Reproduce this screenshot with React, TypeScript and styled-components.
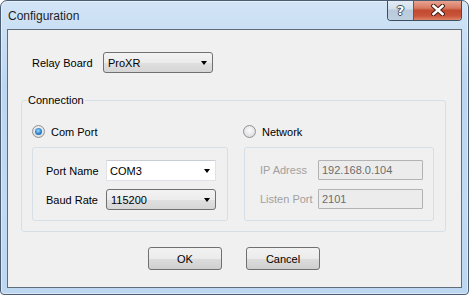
import styled, { createGlobalStyle } from "styled-components";

const GlobalStyle = createGlobalStyle`
  html, body {
    margin: 0;
    padding: 0;
    background: #ffffff;
  }
  body {
    font-family: "Liberation Sans", Arial, sans-serif;
    font-size: 11px;
    color: #000;
  }
`;

const Window = styled.div`
  box-sizing: border-box;
  width: 469px;
  height: 295px;
  border: 1px solid #4a5d72;
  border-radius: 7px 7px 4px 4px;
  background: linear-gradient(180deg, #d2e4f6 0%, #bcd6f1 30%, #c1daf3 70%, #bed7f1 100%);
  display: flex;
  flex-direction: column;
  padding: 0 6px 6px 6px;
  box-shadow: inset 0 0 0 1px rgba(255, 255, 255, 0.45);
  overflow: hidden;
`;

const TitleBar = styled.div`
  height: 28px;
  display: flex;
  align-items: flex-start;
  justify-content: space-between;
  flex-shrink: 0;
`;

const TitleText = styled.div`
  font-size: 12px;
  color: #1e1e1e;
  margin: 8px 0 0 1px;
  line-height: 14px;
`;

const CaptionButtons = styled.div`
  display: flex;
  margin-top: -1px;
  height: 20px;
  border: 1px solid #3d4e60;
  border-top: none;
  border-radius: 0 0 4px 4px;
  overflow: hidden;
`;

const HelpButton = styled.div`
  width: 25px;
  display: flex;
  align-items: center;
  justify-content: center;
  background: linear-gradient(180deg, #e6eef6 0%, #d2dfeb 45%, #b8cadb 50%, #bfd0e0 100%);
  border-right: 1px solid #50606f;
  font-family: "DejaVu Sans", sans-serif;
  font-weight: bold;
  font-size: 13px;
  color: #ffffff;
  text-shadow: 1px 0 #3d4a57, -1px 0 #3d4a57, 0 1px #3d4a57, 0 -1px #3d4a57;
`;

const CloseButton = styled.div`
  width: 47px;
  display: flex;
  align-items: center;
  justify-content: center;
  background: linear-gradient(180deg, #e9a997 0%, #d77a63 40%, #c24a2f 52%, #c9553b 80%, #de8467 100%);
`;

const Client = styled.div`
  flex: 1;
  border: 1px solid #5f6d7b;
  background: #f0f0f0;
  padding: 22px 15px 0 13px;
  display: flex;
  flex-direction: column;
`;

const FieldRow = styled.div<{ $label: number; $indent?: number }>`
  display: flex;
  align-items: center;
  margin-left: ${(p) => p.$indent ?? 0}px;

  & > label {
    width: ${(p) => p.$label}px;
    flex-shrink: 0;
  }
`;

const Label = styled.label<{ $disabled?: boolean }>`
  color: ${(p) => (p.$disabled ? "#a0a0a0" : "#000")};
`;

const Combo = styled.div<{ $editable?: boolean }>`
  box-sizing: border-box;
  width: 110px;
  height: 21px;
  display: flex;
  align-items: center;
  justify-content: space-between;
  padding: 0 5px 0 ${(p) => (p.$editable ? 3 : 4)}px;
  border: 1px solid ${(p) => (p.$editable ? "#dfe3e8" : "#707070")};
  border-radius: ${(p) => (p.$editable ? 1 : 3)}px;
  background: ${(p) =>
    p.$editable
      ? "#ffffff"
      : "linear-gradient(180deg, #f3f3f3 0%, #ececec 50%, #e0e0e0 51%, #d6d6d6 100%)"};
  ${(p) => (p.$editable ? "border-top-color: #c9ced4;" : "")}
`;

const Arrow = styled.span`
  width: 0;
  height: 0;
  border-left: 3.5px solid transparent;
  border-right: 3.5px solid transparent;
  border-top: 4px solid #000;
  margin-top: 1px;
`;

const GroupBox = styled.fieldset`
  margin: 21px 0 0 0;
  padding: 18px 10px 10px 10px;
  border: 1px solid #d5dfe5;
  border-radius: 3px;
  min-inline-size: 0;
  width: 425px;
  box-sizing: border-box;
  display: grid;
  grid-template-columns: 196px 190px;
  column-gap: 16px;
`;

const Legend = styled.legend`
  padding: 0 1px;
  margin-left: -5px;
  line-height: 13px;
  color: #000;
`;

const Column = styled.div`
  display: flex;
  flex-direction: column;
  gap: 9px;
`;

const RadioRow = styled.div<{ $disabled?: boolean }>`
  display: flex;
  align-items: center;
  gap: 6px;
  height: 13px;
  color: #000;
  margin-left: ${(p) => (p.$disabled ? -1 : 0)}px;
`;

const RadioCircle = styled.span<{ $checked?: boolean }>`
  box-sizing: border-box;
  width: 13px;
  height: 13px;
  border-radius: 50%;
  border: 1px solid #8f9297;
  background: radial-gradient(circle at 50% 40%, #fbfbfb 0%, #e6e6e6 55%, #cfcfcf 100%);
  display: flex;
  align-items: center;
  justify-content: center;

  &::after {
    content: "";
    display: ${(p) => (p.$checked ? "block" : "none")};
    width: 7px;
    height: 7px;
    border-radius: 50%;
    background: radial-gradient(circle at 45% 40%, #9ee0ff 0%, #3b8fd6 45%, #15468a 100%);
  }
`;

const Panel = styled.div<{ $pad: string; $gap: number }>`
  border: 1px solid #d5dfe5;
  border-radius: 3px;
  padding: ${(p) => p.$pad};
  display: flex;
  flex-direction: column;
  gap: ${(p) => p.$gap}px;
`;

const TextBox = styled.div`
  box-sizing: border-box;
  width: 105px;
  height: 20px;
  border: 1px solid #b3b3b3;
  border-radius: 1px;
  background: #ececec;
  color: #6d6d6d;
  display: flex;
  align-items: center;
  padding-left: 3px;
`;

const ButtonBar = styled.div`
  display: flex;
  justify-content: center;
  gap: 24px;
  margin-top: 15px;
  padding-left: 1px;
`;

const Button = styled.button`
  box-sizing: border-box;
  width: 74px;
  height: 23px;
  border: 1px solid #707070;
  border-radius: 3px;
  background: linear-gradient(180deg, #f2f2f2 0%, #ebebeb 50%, #dddddd 51%, #cfcfcf 100%);
  font-family: "Liberation Sans", Arial, sans-serif;
  font-size: 11px;
  color: #000;
  padding: 0;
`;

function CloseGlyph() {
  return (
    <svg width="14" height="12" viewBox="0 0 14 12">
      <path d="M2.5 2 L11.5 10 M11.5 2 L2.5 10" stroke="#4a1d12" strokeWidth="4.6" strokeLinecap="square" />
      <path d="M2.5 2 L11.5 10 M11.5 2 L2.5 10" stroke="#ffffff" strokeWidth="2.6" strokeLinecap="square" />
    </svg>
  );
}

export default function App() {
  return (
    <>
      <GlobalStyle />
      <Window>
        <TitleBar>
          <TitleText>Configuration</TitleText>
          <CaptionButtons>
            <HelpButton>?</HelpButton>
            <CloseButton>
              <CloseGlyph />
            </CloseButton>
          </CaptionButtons>
        </TitleBar>
        <Client>
          <FieldRow $label={71} $indent={11}>
            <Label>Relay Board</Label>
            <Combo>
              <span>ProXR</span>
              <Arrow />
            </Combo>
          </FieldRow>

          <GroupBox>
            <Legend>Connection</Legend>
            <Column>
              <RadioRow>
                <RadioCircle $checked />
                <span>Com Port</span>
              </RadioRow>
              <Panel $pad="12px 10px 10px 13px" $gap={8}>
                <FieldRow $label={60}>
                  <Label>Port Name</Label>
                  <Combo $editable>
                    <span>COM3</span>
                    <Arrow />
                  </Combo>
                </FieldRow>
                <FieldRow $label={60}>
                  <Label>Baud Rate</Label>
                  <Combo>
                    <span>115200</span>
                    <Arrow />
                  </Combo>
                </FieldRow>
              </Panel>
            </Column>
            <Column>
              <RadioRow $disabled>
                <RadioCircle />
                <span>Network</span>
              </RadioRow>
              <Panel $pad="12px 10px 11px 15px" $gap={9}>
                <FieldRow $label={58}>
                  <Label $disabled>IP Adress</Label>
                  <TextBox>192.168.0.104</TextBox>
                </FieldRow>
                <FieldRow $label={58}>
                  <Label $disabled>Listen Port</Label>
                  <TextBox>2101</TextBox>
                </FieldRow>
              </Panel>
            </Column>
          </GroupBox>

          <ButtonBar>
            <Button>OK</Button>
            <Button>Cancel</Button>
          </ButtonBar>
        </Client>
      </Window>
    </>
  );
}
